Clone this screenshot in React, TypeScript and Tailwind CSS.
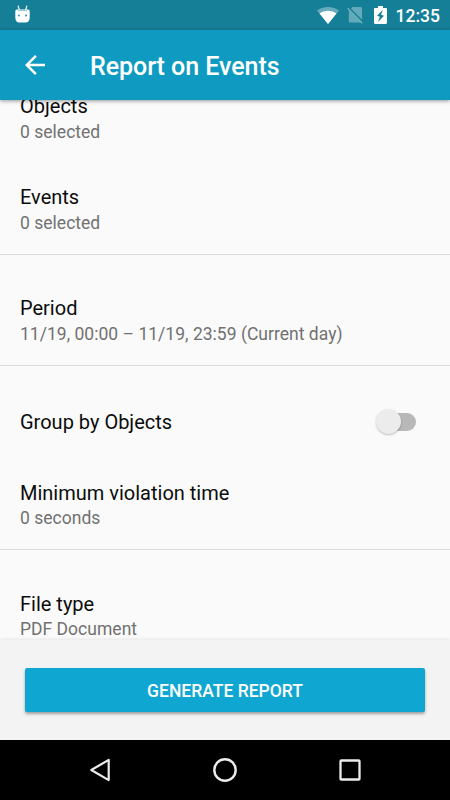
import React, { useState } from 'react';

interface PreferenceProps {
    title: string;
    summary: string;
    className?: string;
}

export default function App() {
    const [groupByObjects, setGroupByObjects] = useState<boolean>(false);

    return (
        <div className="flex flex-col w-[450px] h-[800px] overflow-hidden bg-[#fafafa] font-[Roboto,sans-serif]">
            <StatusBar />
            <Toolbar title="Report on Events" />
            <main className="h-[540px] overflow-hidden">
                <section className="-mt-[26px] border-b border-[#dadada]">
                    <Preference title="Objects" summary="0 selected" className="pt-5 pb-[22px]" />
                    <Preference title="Events" summary="0 selected" className="py-5" />
                </section>
                <section className="border-b border-[#dadada]">
                    <Preference
                        title="Period"
                        summary="11/19, 00:00 – 11/19, 23:59 (Current day)"
                        className="pt-[41px] pb-5"
                    />
                </section>
                <section className="border-b border-[#dadada]">
                    <div className="flex items-center justify-between pt-[44px] pb-[23px] pl-5 pr-[34px]">
                        <h2 className="text-[20px] leading-6 text-[#0c0c0c]">Group by Objects</h2>
                        <Toggle checked={groupByObjects} onChange={setGroupByObjects} />
                    </div>
                    <Preference
                        title="Minimum violation time"
                        summary="0 seconds"
                        className="pt-[24px] pb-5 [&>p]:mt-[2px]"
                    />
                </section>
                <section>
                    <Preference title="File type" summary="PDF Document" className="pt-[42px] pb-5 [&>p]:mt-[2px]" />
                </section>
            </main>
            <footer className="relative h-[100px] px-[25px] pt-7 bg-[#f3f3f3] shadow-[0_0_4px_rgba(0,0,0,0.12)]">
                <button className="w-full h-[44px] pt-[2px] rounded-[2px] bg-[#0fa7d2] text-white text-[17.5px] font-medium shadow-[0_2px_3px_rgba(0,0,0,0.35)]">
                    GENERATE REPORT
                </button>
            </footer>
            <NavigationBar />
        </div>
    );
}

const StatusBar: React.FC = () => {
    return (
        <div className="flex items-center justify-between h-[30px] shrink-0 pl-[15px] pr-[10px] bg-[#157f97]">
            <svg className="w-[15px] h-[18px] -mt-[3px]" viewBox="0 0 15 18">
                <path d="M3.2 1l1.1 4M11.8 1l-1.1 4" stroke="#fff" strokeWidth="1.1" strokeLinecap="round" />
                <path
                    d="M2 4.5h11c1 0 1.7.8 1.7 1.8v6.2c0 3-1.5 5-4.2 5h-6c-2.7 0-4.2-2-4.2-5V6.3c0-1 .7-1.8 1.7-1.8z"
                    fill="#fff"
                />
                <path d="M3 5.2h9v.9H3z" fill="#8bbfcb" />
                <circle cx="3.9" cy="10.4" r="1" fill="#3f94a7" />
                <circle cx="11.1" cy="10.4" r="1" fill="#3f94a7" />
            </svg>
            <div className="flex items-center">
                <svg className="w-[22px] h-[18px]" viewBox="0 0 22 18">
                    <path d="M0 4.6C3 2.1 6.9.9 11 .9s8 1.2 11 3.7L11 18z" fill="#fff" fillOpacity=".35" />
                    <path d="M2.5 7.5C5 5.7 7.9 4.8 11 4.8s6 .9 8.5 2.7L11 18z" fill="#fff" />
                </svg>
                <svg className="w-4 h-[18px] ml-2" viewBox="0 0 16 18">
                    <path
                        d="M15 2.2v11.6L4 2.8 5.2 1h8.6c.7 0 1.2.5 1.2 1.2zM1.8 4.5L13.8 16.5H3.4c-.9 0-1.6-.7-1.6-1.6z"
                        fill="#fff"
                        fillOpacity=".33"
                    />
                    <path d="M.7 2.3l14.6 15" stroke="#fff" strokeOpacity=".4" strokeWidth="1.3" />
                </svg>
                <svg className="w-[13px] h-[18px] ml-[11px]" viewBox="0 0 13 18">
                    <path
                        d="M4 0h5v2h2.8c.7 0 1.2.5 1.2 1.2v13.6c0 .7-.5 1.2-1.2 1.2H1.2C.5 18 0 17.5 0 16.8V3.2C0 2.5.5 2 1.2 2H4z"
                        fill="#fff"
                    />
                    <path d="M8.8 4L3 9.8l2.9 1L4 16l6-6.2-2.9-1z" fill="#157f97" />
                </svg>
                <span className="ml-[9px] mt-[2px] text-[17.5px] leading-5 font-medium text-white">12:35</span>
            </div>
        </div>
    );
};

const Toolbar: React.FC<{ title: string }> = ({ title }) => {
    return (
        <header className="relative z-10 flex items-center h-[70px] shrink-0 pl-[25px] bg-[#0f9bc1] shadow-[0_1px_4px_rgba(0,0,0,0.4)]">
            <svg className="w-5 h-5" viewBox="4 4 16 16">
                <path d="M20 11H7.83l5.59-5.59L12 4l-8 8 8 8 1.41-1.41L7.83 13H20v-2z" fill="#fff" />
            </svg>
            <h1 className="ml-[45px] mt-[4px] text-[25px] leading-[30px] tracking-[-0.04px] font-medium text-white">{title}</h1>
        </header>
    );
};

const Preference: React.FC<PreferenceProps> = ({ title, summary, className }) => {
    return (
        <div className={`px-5 ${className}`}>
            <h2 className="text-[20px] leading-6 text-[#0c0c0c]">{title}</h2>
            <p className="mt-[3px] text-[17.5px] leading-[22px] tracking-[0.02px] text-[#717171]">{summary}</p>
        </div>
    );
};

interface ToggleProps {
    checked: boolean;
    onChange: (checked: boolean) => void;
}

const Toggle: React.FC<ToggleProps> = ({ checked, onChange }) => {
    return (
        <button
            role="switch"
            aria-checked={checked}
            onClick={() => onChange(!checked)}
            className="flex items-center w-[40px] h-6 -mt-[1px]"
        >
            <span className="relative z-10 w-[25px] h-[25px] shrink-0 rounded-full bg-[#ececec] shadow-[0_1px_2px_rgba(0,0,0,0.25)]" />
            <span className="w-[28px] h-[18px] -ml-[13px] shrink-0 rounded-full bg-[#b8b8b8]" />
        </button>
    );
};

const NavigationBar: React.FC = () => {
    return (
        <nav className="flex items-center justify-between h-[60px] shrink-0 px-[88px] bg-black">
            <svg className="w-6 h-6" viewBox="0 0 24 24" fill="none" stroke="#ececec" strokeWidth="2.2">
                <path d="M20.7 1.9v20.2L3.3 12z" strokeLinejoin="round" />
            </svg>
            <svg className="w-6 h-6" viewBox="0 0 24 24" fill="none" stroke="#ececec" strokeWidth="2.4">
                <circle cx="12" cy="12" r="10.7" />
            </svg>
            <svg className="w-6 h-6" viewBox="0 0 24 24" fill="none" stroke="#ececec" strokeWidth="2.3">
                <rect x="2.5" y="2.5" width="19" height="19" rx="0.8" />
            </svg>
        </nav>
    );
};
